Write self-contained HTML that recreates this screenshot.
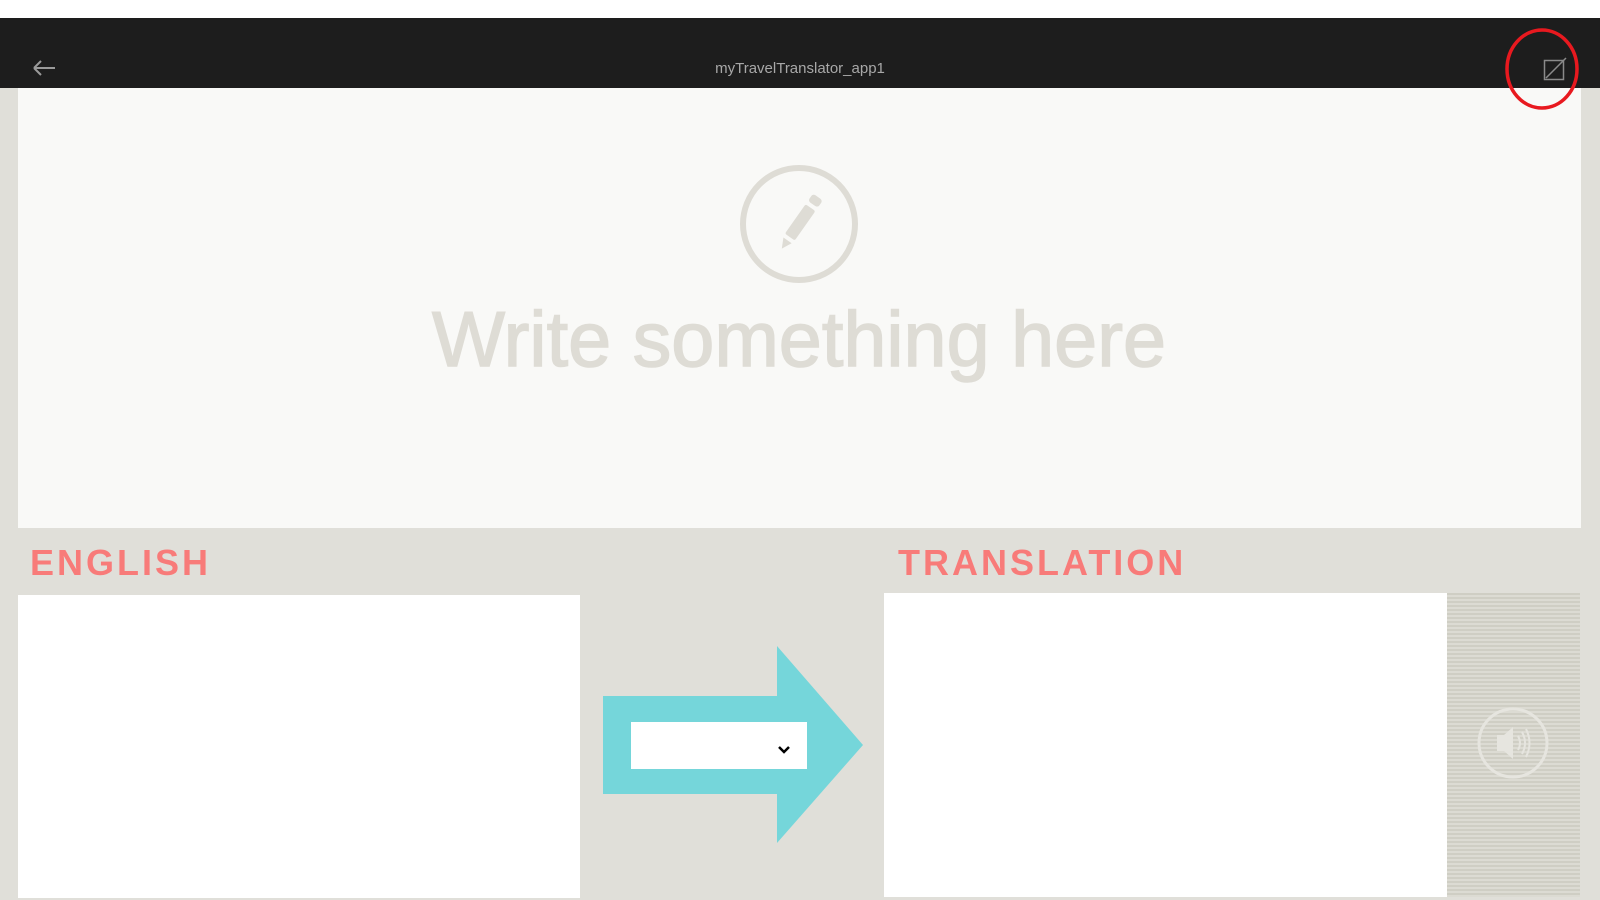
<!DOCTYPE html>
<html><head><meta charset="utf-8"><style>
html,body{margin:0;padding:0;}
body{width:1600px;height:900px;position:relative;overflow:hidden;background:#e0dfd9;font-family:"Liberation Sans",sans-serif;}
.abs{position:absolute;}
</style></head><body>
<div class="abs" style="left:0;top:0;width:1600px;height:18px;background:#fff"></div>
<div class="abs" style="left:0;top:18px;width:1600px;height:70px;background:#1d1d1d"></div>
<svg class="abs" style="left:30px;top:58px" width="30" height="20"><path d="M4 10H25M4 10L11 3M4 10L11 17" stroke="#9a9a9a" stroke-width="2" fill="none"/></svg>
<div class="abs" style="left:600px;top:60px;width:400px;text-align:center;color:#a8a8a8;font-size:15px">myTravelTranslator_app1</div>
<div class="abs" style="left:18px;top:88px;width:1563px;height:440px;background:#f9f9f7"></div>
<svg class="abs" style="left:0;top:0" width="1600" height="540">
<circle cx="799" cy="224" r="56" fill="none" stroke="#dedcd5" stroke-width="6"/>
<g transform="translate(799,224) rotate(35)">
<rect x="-6" y="-20" width="12" height="36" rx="2" fill="#dedcd5"/>
<rect x="-6" y="-33" width="12" height="9" rx="3" fill="#dedcd5"/>
<path d="M-5 20L5 20L0 30Z" fill="#dedcd5"/>
</g>
<text x="432" y="366" font-size="78" textLength="734" lengthAdjust="spacingAndGlyphs" fill="#dedcd5" stroke="#dedcd5" stroke-width="1.5" font-family="Liberation Sans, sans-serif">Write something here</text>
</svg>
<div class="abs" style="left:30px;top:542px;color:#f87b79;font-size:36px;font-weight:bold;letter-spacing:3px">ENGLISH</div>
<div class="abs" style="left:898px;top:542px;color:#f87b79;font-size:36px;font-weight:bold;letter-spacing:3px">TRANSLATION</div>
<div class="abs" style="left:18px;top:595px;width:562px;height:303px;background:#fff"></div>
<div class="abs" style="left:884px;top:593px;width:563px;height:304px;background:#fff"></div>
<div class="abs" style="left:1447px;top:593px;width:133px;height:304px;background:repeating-linear-gradient(#cfcec4 0 2px,#dcdbd3 2px 4px)"></div>
<svg class="abs" style="left:1447px;top:593px" width="133" height="304">
<circle cx="66" cy="150" r="34" fill="none" stroke="#e6e5df" stroke-width="3"/>
<path d="M50 142H57L66 134V166L57 158H50Z" fill="#e6e5df"/>
<path d="M71 143Q75 150 71 157M75 139Q81 150 75 161M79 136Q86 150 79 164" fill="none" stroke="#e6e5df" stroke-width="2"/>
</svg>
<svg class="abs" style="left:0;top:600px" width="900" height="260">
<path d="M603 96H777V46L863 145L777 243V194H603Z" fill="#75d6da"/>
<rect x="631" y="122" width="176" height="47" fill="#fff"/>
<path d="M779 147L784 152L789 147" fill="none" stroke="#000" stroke-width="2.5"/>
</svg>
<svg class="abs" style="left:1500px;top:25px" width="90" height="90">
<rect x="44.5" y="35.5" width="19" height="19" fill="none" stroke="#8a8a8a" stroke-width="1.5"/>
<path d="M46 53L66 33" stroke="#8a8a8a" stroke-width="1.5"/>
<ellipse cx="42" cy="44" rx="35" ry="39" fill="none" stroke="#e8191f" stroke-width="3.5"/>
</svg>
</body></html>
